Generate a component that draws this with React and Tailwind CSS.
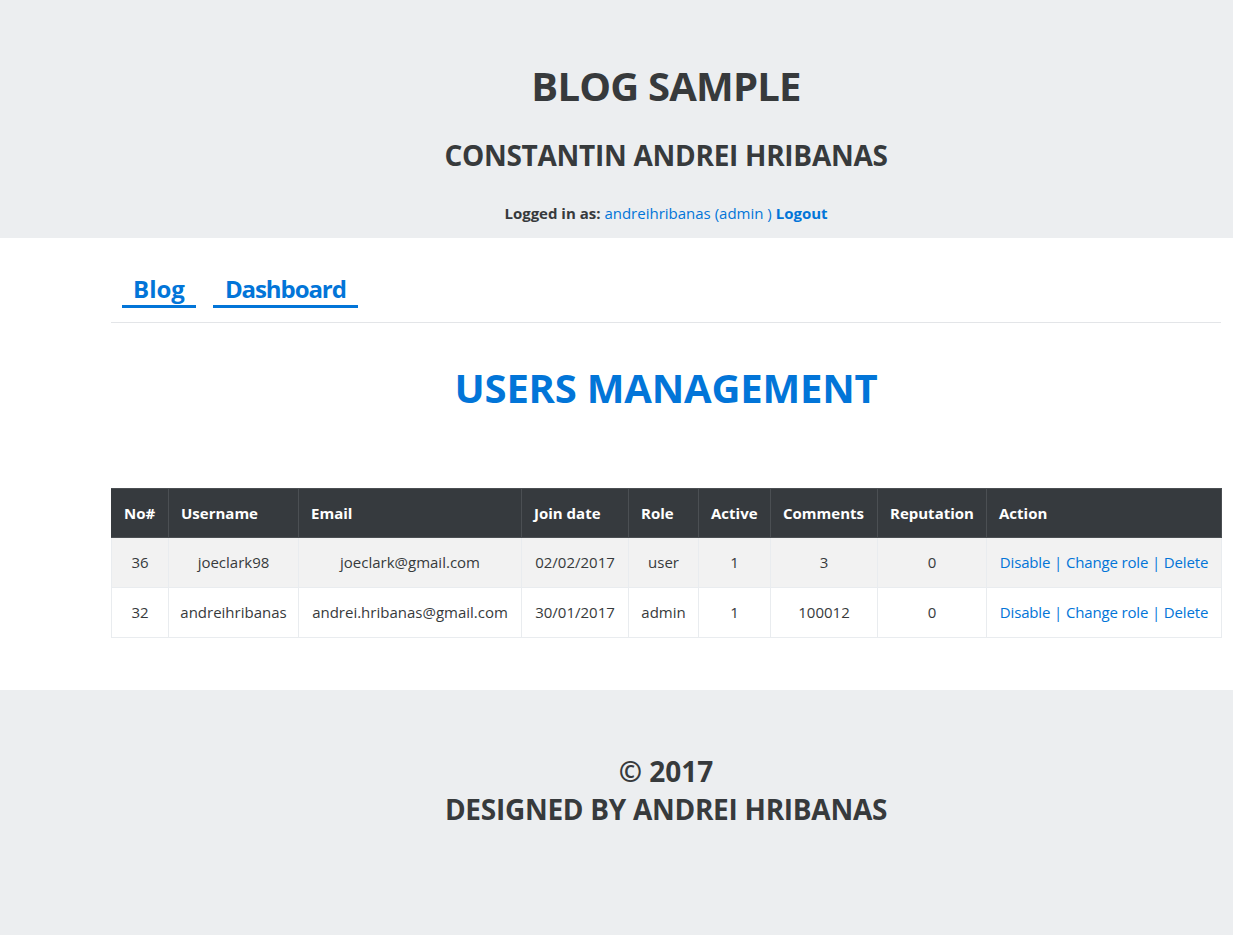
import React from 'react';

const columns = [
  { label: 'No#', width: 'w-[57px]' },
  { label: 'Username', width: 'w-[130px]' },
  { label: 'Email', width: 'w-[223px]' },
  { label: 'Join date', width: 'w-[107px]' },
  { label: 'Role', width: 'w-[70px]' },
  { label: 'Active', width: 'w-[72px]' },
  { label: 'Comments', width: 'w-[107px]' },
  { label: 'Reputation', width: 'w-[109px]' },
  { label: 'Action', width: 'w-[235px]' }
];

const users = [
  { id: 36, username: 'joeclark98', email: 'joeclark@gmail.com', joined: '02/02/2017', role: 'user', active: 1, comments: 3, reputation: 0 },
  { id: 32, username: 'andreihribanas', email: 'andrei.hribanas@gmail.com', joined: '30/01/2017', role: 'admin', active: 1, comments: 100012, reputation: 0 }
];

export default function App() {
  return (
    <div className="min-h-[935px] flex flex-col bg-white text-[#373a3c] font-['Open_Sans',sans-serif]">
      <header className="h-[238px] bg-[#eceef0] pt-[62px] pl-[111px] w-full">
        <div className="w-[1110px] flex flex-col items-center">
          <h1 className="text-[40px] leading-[48px] font-bold tracking-[-0.02em]">BLOG SAMPLE</h1>
          <h3 className="mt-[28px] text-[28px] leading-[34px] font-bold tracking-[-0.01em]">CONSTANTIN ANDREI HRIBANAS</h3>
          <p className="mt-[30px] text-[15px] leading-[22px]">
            <span className="font-bold">Logged in as: </span>
            <a href="#" className="text-[#0275d8]">andreihribanas (admin )</a>{' '}
            <a href="#" className="text-[#0275d8] font-bold">Logout</a>
          </p>
        </div>
      </header>

      <main className="pl-[111px] pb-[52px]">
        <div className="w-[1110px]">
          <nav className="pt-[36px] pl-[11px] pb-[14px] flex gap-[17px] border-b border-[#e3e5e8]">
            <a href="#" className="pl-[11px] pr-[11px] pb-[2px] text-[24px] leading-[29px] font-bold text-[#0275d8] border-b-[3px] border-[#0275d8]">Blog</a>
            <a href="#" className="pl-[12px] pr-[12px] pb-[2px] text-[24px] leading-[29px] font-bold tracking-[-0.045em] text-[#0275d8] border-b-[3px] border-[#0275d8]">Dashboard</a>
          </nav>

          <h2 className="mt-[41px] text-center text-[40px] leading-[48px] font-bold tracking-[-0.005em] text-[#0275d8]">USERS MANAGEMENT</h2>

          <table className="mt-[76px] w-[1110px] table-fixed border-collapse text-[15px]">
            <thead>
              <tr className="bg-[#363a3e] text-white">
                {columns.map((col) => (
                  <th key={col.label} className={`${col.width} h-[49px] px-[12px] text-left font-bold leading-[22px] border border-[#4b4f53] first:border-l-[#363a3e]`}>
                    {col.label}
                  </th>
                ))}
              </tr>
            </thead>
            <tbody>
              {users.map((user, index) => (
                <tr key={user.id} className={index % 2 === 0 ? 'bg-[#f2f2f2]' : 'bg-white'}>
                  <td className="h-[50px] px-[6px] text-center border border-[#e9ecef]">{user.id}</td>
                  <td className="px-[6px] text-center border border-[#e9ecef]">{user.username}</td>
                  <td className="px-[6px] text-center border border-[#e9ecef]">{user.email}</td>
                  <td className="px-[6px] text-center border border-[#e9ecef]">{user.joined}</td>
                  <td className="px-[6px] text-center border border-[#e9ecef]">{user.role}</td>
                  <td className="px-[6px] text-center border border-[#e9ecef]">{user.active}</td>
                  <td className="px-[6px] text-center border border-[#e9ecef]">{user.comments}</td>
                  <td className="px-[6px] text-center border border-[#e9ecef]">{user.reputation}</td>
                  <td className="px-[6px] text-center border border-[#e9ecef] text-[#0275d8] tracking-[-0.01em]">
                    <a href="#">Disable</a> | <a href="#">Change role</a> | <a href="#">Delete</a>
                  </td>
                </tr>
              ))}
            </tbody>
          </table>
        </div>
      </main>

      <footer className="flex-1 bg-[#eceef0] pt-[62px] pl-[111px]">
        <div className="w-[1110px] flex flex-col items-center">
          <h3 className="text-[28px] leading-[38px] font-bold">© 2017</h3>
          <h3 className="text-[28px] leading-[38px] font-bold tracking-[-0.01em]">DESIGNED BY ANDREI HRIBANAS</h3>
        </div>
      </footer>
    </div>
  );
}
